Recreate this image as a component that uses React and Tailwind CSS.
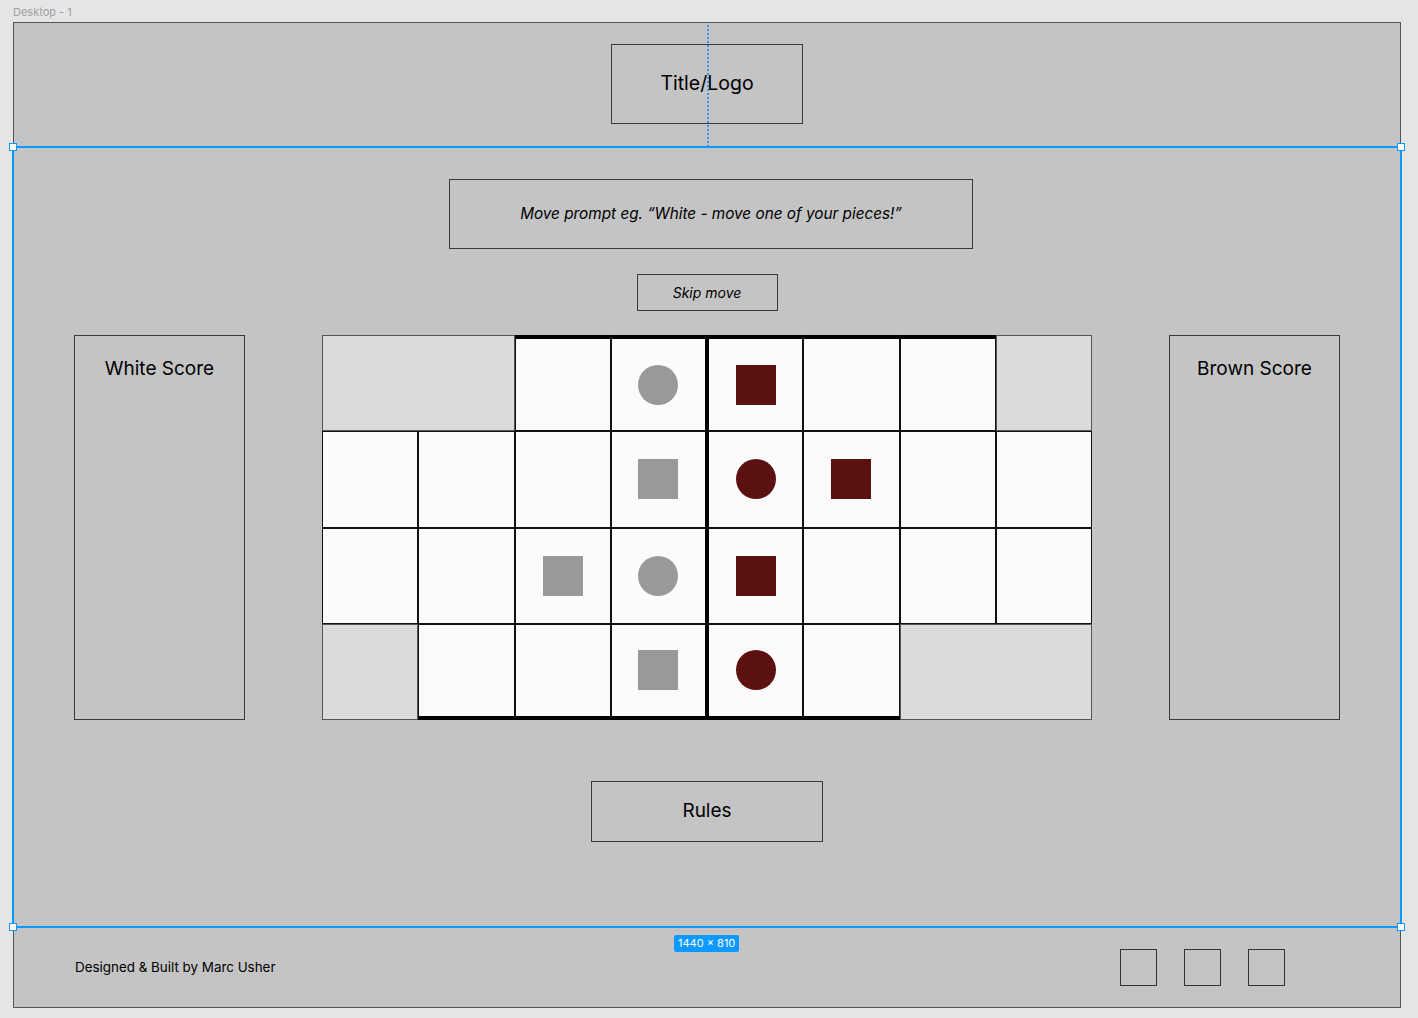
import React from 'react';

const GRAY = 'bg-[#dcdadb]';

// board layout: 8 columns x 4 rows; off = grey cell outside the track
const rows = [
  [{ off: true, span: 2 }, {}, { piece: 'gc' }, { piece: 'bs' }, {}, {}, { off: true }],
  [{}, {}, {}, { piece: 'gs' }, { piece: 'bc' }, { piece: 'bs' }, {}, {}],
  [{}, {}, { piece: 'gs' }, { piece: 'gc' }, { piece: 'bs' }, {}, {}, {}],
  [{ off: true }, {}, {}, { piece: 'gs' }, { piece: 'bc' }, {}, { off: true, span: 2 }],
];

const Piece = ({ kind }) => {
  if (!kind) return null;
  const color = kind[0] === 'g' ? 'bg-[#999999]' : 'bg-[#5c1111]';
  const shape = kind[1] === 'c' ? 'rounded-full' : '';
  return <div className={`w-[40px] h-[40px] ${color} ${shape}`} />;
};

const Board = () => {
  const cells = [];
  rows.forEach((row, r) => {
    let col = 0;
    row.forEach((cell, i) => {
      const span = cell.span || 1;
      const start = col;
      col += span;
      if (cell.off) {
        cells.push(
          <div
            key={`${r}-${i}`}
            className={`${GRAY} border border-[#555] ${span === 2 ? 'col-span-2' : ''}`}
          />
        );
        return;
      }
      const thickTop = r === 0 && start >= 2 && start <= 6;
      const thickBottom = r === 3 && start >= 1 && start <= 5;
      const cls = [
        'bg-[#fbfbfb] border border-[#111] flex items-center justify-center',
        thickTop ? 'border-t-4 border-t-black' : '',
        thickBottom ? 'border-b-4 border-b-black' : '',
        start === 3 ? 'border-r-2 border-r-black' : '',
        start === 4 ? 'border-l-2 border-l-black' : '',
      ].join(' ');
      cells.push(
        <div key={`${r}-${i}`} className={cls}>
          <Piece kind={cell.piece} />
        </div>
      );
    });
  });
  return (
    <div className="grid grid-cols-8 grid-rows-4 w-[770px] h-[385px]">
      {cells}
    </div>
  );
};

const ScorePanel = ({ label }) => (
  <div className="w-[171px] h-[385px] border border-[#3a3a3a] flex justify-center pt-[21px]">
    <span className="text-[19px] leading-[24px]">{label}</span>
  </div>
);

const Handle = ({ className }) => (
  <div className={`absolute w-[8px] h-[8px] bg-white border border-[#0d99ff] ${className}`} />
);

export default function App() {
  return (
    <div
      className="min-h-screen bg-[#e5e5e5] px-[13px] text-black"
      style={{ fontFamily: 'Inter, "Noto Sans", sans-serif' }}
    >
      <div className="h-[22px] pt-[5px] text-[11px] leading-[14px] text-[#a0a0a0]">Desktop - 1</div>

      <div className="w-[1388px] h-[986px] bg-[#c4c4c4] border border-[#555] flex flex-col">
        {/* header */}
        <header className="relative h-[124px] flex justify-center pt-[21px]">
          <div className="w-[192px] h-[80px] border border-[#3a3a3a] flex items-center justify-center text-[19.5px]">
            Title/Logo
          </div>
          {/* centre guide */}
          <div className="absolute left-[693px] top-[2px] bottom-0 border-l-2 border-dotted border-[#2e9bf5]" />
        </header>

        {/* main */}
        <main className="relative h-[780px] flex flex-col items-center">
          <div className="absolute -left-[2px] -right-[2px] -top-px -bottom-px border-2 border-[#0d99ff] pointer-events-none" />
          <Handle className="-left-[5px] -top-[4px]" />
          <Handle className="-right-[5px] -top-[4px]" />
          <Handle className="-left-[5px] -bottom-[4px]" />
          <Handle className="-right-[5px] -bottom-[4px]" />

          <div className="mt-[32px] pl-[8px]">
            <div className="w-[524px] h-[70px] border border-[#3a3a3a] flex items-center justify-center italic text-[15.3px]">
              Move prompt eg. “White - move one of your pieces!”
            </div>
          </div>

          <div className="mt-[25px] w-[141px] h-[37px] border border-[#3a3a3a] flex items-center justify-center italic text-[14px]">
            Skip move
          </div>

          <div className="mt-[24px] w-full flex justify-center gap-[77px]">
            <ScorePanel label="White Score" />
            <Board />
            <ScorePanel label="Brown Score" />
          </div>

          <div className="mt-[61px] w-[232px] h-[61px] border border-[#3a3a3a] flex items-center justify-center text-[19px]">
            Rules
          </div>

          <div className="absolute left-[660px] -bottom-[25px] h-[17px] px-[4px] rounded-[2px] bg-[#0d99ff] text-white text-[11px] leading-[17px]">
            1440 × 810
          </div>
        </main>

        {/* footer */}
        <footer className="flex-1 flex items-center justify-between pl-[61px] pr-[115px]">
          <span className="text-[13.4px]">Designed &amp; Built by Marc Usher</span>
          <div className="flex gap-[27px]">
            <div className="w-[37px] h-[37px] border border-[#333]" />
            <div className="w-[37px] h-[37px] border border-[#333]" />
            <div className="w-[37px] h-[37px] border border-[#333]" />
          </div>
        </footer>
      </div>
    </div>
  );
}
